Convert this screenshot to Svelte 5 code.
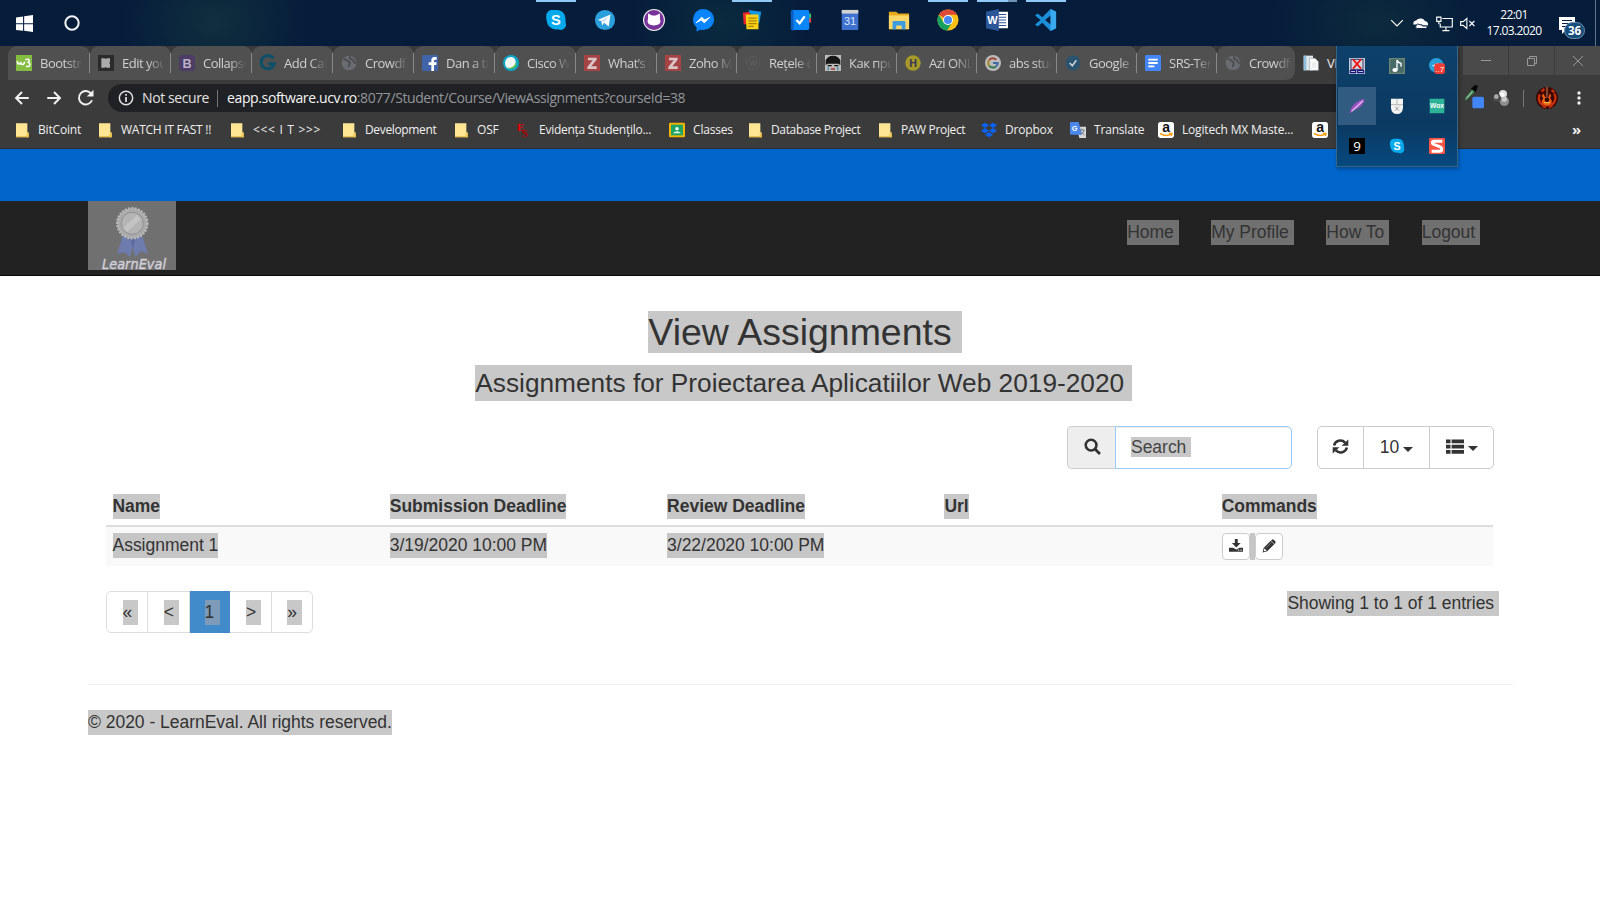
<script>
  const letter = (t, color, size = 15, extra = '') =>
    `<text x="12" y="${12 + size * 0.37}" text-anchor="middle" font-family="Liberation Sans, sans-serif" font-weight="700" font-size="${size}" fill="${color}" ${extra}>${t}</text>`;

  const icons = {
    skype: `<path d="M7 1h7a9 9 0 0 1 8 8c1 3 0 6 1 8a6 6 0 0 1-9 5A10 10 0 0 1 2 13C1 10 0 2 7 1z" fill="#06a9ec"/>` + letter('S', '#fff', 16),
    telegram: `<circle cx="12" cy="12" r="11" fill="#2a9fdb"/><path d="M4 12l14-6-2 13-5-4-2 3-1-5z" fill="#fff"/><path d="M8 13l8-5-5 6" fill="#b9d8ea"/>`,
    github: `<circle cx="12" cy="12" r="12" fill="#eee"/><circle cx="12" cy="12" r="10.8" fill="#773399"/><path d="M5.500 5l4.500 2h4l4.500-2v6c2 5-2 7-6.500 7s-8.500-2-6.500-7z" fill="#fff"/>`,
    messenger: `<path d="M12 0a12 11.500 0 0 1 0 23l-3-.3L5 24.500V20A11.500 11.500 0 0 1 12 0z" fill="#0a84ff"/><path d="M4.500 15l6-6 3.500 3 5.500-3-6 6-3.500-3z" fill="#fff" stroke="#fff"/>`,
    notes: `<path d="M2 4l8-1-2 13-5 1z" fill="#e6252b"/><path d="M8 1l14 2-2 12-4 2z" fill="#1597e5"/><path d="M5 6h14v16H6z" fill="#fcd116"/><path d="M8 10h9M8 13h9M8 16h9M8 19h6" stroke="#a88400" stroke-width="1.300"/>`,
    todo: `<path d="M20 5h3v5h-3z" fill="#2ec36a"/><path d="M20 10h3v5h-3z" fill="#ea4335"/><rect x="1" y="1" width="20" height="22" rx="2" fill="#0b86f8"/><path d="M1 3l3-3v24l-3-2z" fill="#0a5fc7"/><path d="M7 12l3.500 3.500L16 8" fill="none" stroke="#fff" stroke-width="2.500"/>`,
    calendar: `<rect x="3" y="1" width="18" height="22" rx="1" fill="#4071ce"/><rect x="3" y="1" width="18" height="4" fill="#d2d2d2"/>` + letter('31', '#d9e6ff', 12, 'style="font-weight:400" dy="1.5"'),
    folder: `<path d="M1 3h8l2 2h12v17H1z" fill="#e8a91a"/><path d="M1 7h22v15H1z" fill="#fbd768"/><path d="M5 22v-8q0-1 1-1h12q1 0 1 1v8h-4v-4H9v4z" fill="#3d9be0"/>`,
    chrome: `<circle cx="12" cy="12" r="11.500" fill="#fbc116"/><path d="M12 12L2 6.300A11.500 11.500 0 0 1 22 6.300H12z" fill="#de4a38"/><path d="M2 6.300A11.500 11.500 0 0 0 11 23.500l5.500-9L12 12 7 14.500z" fill="#18a05e"/><circle cx="12" cy="12" r="5.500" fill="#fff"/><circle cx="12" cy="12" r="4.400" fill="#4688f1"/>`,
    word: `<path d="M11 3h13v18H11z" fill="#fff"/><path d="M14 6h8M14 9h8M14 12h8M14 15h8M14 18h8" stroke="#2b579a" stroke-width="1.300"/><path d="M0 3l14-3v24L0 21z" fill="#2b579a"/><text x="7" y="16.500" text-anchor="middle" font-family="Liberation Sans, sans-serif" font-weight="700" font-size="12" fill="#fff">W</text>`,
    vscode: `<path d="M17 0l6 3v18l-6 3-9-9-5 4-3-2 6-5-6-5 3-2 5 4zM17 7l-6 5 6 5z" fill="#1c8ed8" fill-rule="evenodd"/><path d="M17 0l6 3v18l-6 3z" fill="#3aa8ec"/>`,

    w3: `<rect width="24" height="24" fill="#85bd43"/><path d="M2 9c0 6 5 6 5 1 0 5 5 6 6 0M14 7c7-3 7 4 3 4 6 0 5 8-2 6" fill="none" stroke="#fff" stroke-width="2.300"/>`,
    kick: `<rect width="24" height="24" fill="#2b2b2b"/><path d="M5 5h5l1 1 2-1h5v5l-1 2 1 2v5h-5l-2-1-1 1H5z" fill="#aaa"/>`,
    boot: `<rect width="24" height="24" rx="4" fill="#4c3c66"/>` + letter('B', '#b9b1c6', 19),
    gteal: `<path d="M20 5A10 10 0 1 0 21.500 13H12" fill="none" stroke="#0e5069" stroke-width="4.500"/>`,
    globe: `<circle cx="12" cy="12" r="11" fill="#696c70"/><path d="M4 6c4 0 5 3 8 4s-1 5 0 8M14 2c-4 5 6 4 5 8l3 3" fill="none" stroke="#4b4d50" stroke-width="3"/>`,
    fb: `<rect width="24" height="24" rx="1" fill="#4063a9"/><path d="M14 24v-9h-4v-4h4V8q0-5 5-5h3v4h-2q-2 0-2 2v2h4l-.6 4H18v9z" fill="#fff"/>`,
    webex: `<circle cx="12" cy="12" r="12" fill="#06a5c6"/><path d="M3 12A9 9 0 0 1 12 3a7 7 0 0 1 7 7c0 6-7 12-13 9a9 9 0 0 1-3-7z" fill="#f4f7f4"/><path d="M7 19c6 1 11-3 13-9 2 7-6 14-13 9z" fill="#6dbf4b"/>`,
    zoho: `<rect width="24" height="24" fill="#a54345"/><path d="M6 4h13v3l-8 10h8v4H5v-3l8-10H6z" fill="#dbc4c5"/>`,
    wordpress: `<circle cx="12" cy="12" r="10" fill="none" stroke="#5b5b5b" stroke-width="1.500"/>` + letter('W', '#5d5d5d', 13),
    face: `<rect width="24" height="24" fill="#bcbcbc"/><path d="M1 15V8q3-7 11-7t11 7v7l-3-2H4z" fill="#161616"/><path d="M4 16h6M14 16h6" stroke="#111" stroke-width="2"/><path d="M5 18v5M19 18v5" stroke="#3a90b0" stroke-width="2"/><path d="M9 21h6" stroke="#a22" stroke-width="2"/>`,
    hcircle: `<circle cx="12" cy="12" r="11.500" fill="#a59a28"/>` + letter('H', '#35325c', 16),
    googlew: `<circle cx="12" cy="12" r="12" fill="#bbb"/><g transform="translate(3 3) scale(.75)"><path d="M4.500 6A9.500 9.500 0 0 1 18.500 5.500" stroke="#a5443c" stroke-width="4" fill="none"/><path d="M4.500 6A10 10 0 0 0 4.500 18" stroke="#a98b30" stroke-width="4" fill="none"/><path d="M4.500 17.500A9.500 9.500 0 0 0 18 19" stroke="#2f7548" stroke-width="4" fill="none"/><path d="M12 12h9.500q0 4-3.500 7" stroke="#416ba5" stroke-width="4" fill="none"/></g>`,
    check: `<path d="M12 0l3 2 4 0 1 4 3 3-1 3 1 4-3 2-1 4-4 0-3 2-3-2-4 0-1-4-3-2 1-4-1-3 3-3 1-4 4 0z" fill="#2a5370"/><path d="M7 12l4 4 6-8" fill="none" stroke="#c8d0d6" stroke-width="2.500"/>`,
    docs: `<rect width="24" height="24" rx="2" fill="#4285f4"/><path d="M5 7h14M5 12h14M5 17h9" stroke="#fff" stroke-width="2.700"/>`,
    page: `<path d="M1 1h14v22H1z" fill="#dfe6ea"/><path d="M1 1h4v22H1z" fill="#8fc0de"/><path d="M10 5h8l5 5v13H10z" fill="#fff" stroke="#9aa7ae"/><path d="M13 12h7M13 15h7M13 18h7" stroke="#c5ccd0"/>`,

    bmfolder: `<path d="M3 2h17v13l2 1v7H3z" fill="#ffe694"/><path d="M19 16h3v7h-3z" fill="#f1c64a"/><path d="M3 22h19" stroke="#e4bb48" stroke-width="1.500"/>`,
    es: `<text x="3" y="13" font-family="Liberation Serif, serif" font-weight="700" font-size="17" fill="#e90006">E</text><text x="10" y="22" font-family="Liberation Serif, serif" font-weight="700" font-size="17" fill="#a80000">S</text>`,
    classes: `<rect y="1" width="24" height="22" rx="2" fill="#f4b400"/><rect x="3" y="4" width="18" height="16" fill="#1fa463"/><circle cx="12" cy="10" r="2.500" fill="#fff"/><path d="M6 17q6-6 12 0z" fill="#e5f5ec"/>`,
    dropbox: `<path d="M6 1l6 4-6 4-6-4zM18 1l6 4-6 4-6-4zM6 9l6 4-6 4-6-4zM18 9l6 4-6 4-6-4zM12 15l6 4-6 4-6-4z" fill="#0a62f5"/>`,
    translate: `<path d="M10 7h14v17H14z" fill="#d8d8d8"/><path d="M0 0h13l5 19H2q-2 0-2-2z" fill="#4a86ec"/><text x="7" y="14" text-anchor="middle" font-family="Liberation Sans, sans-serif" font-weight="700" font-size="11" fill="#fff">G</text><path d="M14 12h8M18 10v2M21 12q-1 5-5 7M16 14l6 6" stroke="#66737e" fill="none" stroke-width="1.300"/>`,
    amazon: `<rect width="24" height="24" rx="4" fill="#fff"/><text x="12" y="15.500" text-anchor="middle" font-family="Liberation Sans, sans-serif" font-weight="700" font-size="21" fill="#111">a</text><path d="M3 17q9 6 17 1M16 17h5l-1 4" fill="none" stroke="#ff9900" stroke-width="2"/>`,

    screens: `<rect width="24" height="24" fill="#c7c7d5"/><rect x="3" y="2" width="18" height="15" fill="#d5d5dc" stroke="#23235a" stroke-width="1.300"/><path d="M6 2l12 14M18 2L6 16" stroke="#f01010" stroke-width="2.500"/><path d="M2 19h8v3H2zM13 19h9v3h-9z" fill="#fff" stroke="#11117b" stroke-width="1.700"/>`,
    music: `<rect width="24" height="24" fill="#476a6b"/><rect x="1" y="1" width="22" height="22" fill="none" stroke="#6e8574" stroke-width="2"/><path d="M12 18V3q1 4 6 5v5" fill="none" stroke="#fff" stroke-width="2"/><ellipse cx="9" cy="18" rx="4" ry="3" fill="#fff"/>`,
    tgbadge: `<circle cx="11" cy="11" r="11" fill="#289fd9"/><path d="M4 12l9-5v6z" fill="#fff"/><rect x="8" y="8" width="16" height="16" rx="4" fill="#f23c34"/><text x="16" y="21" text-anchor="middle" font-family="Liberation Sans, sans-serif" font-size="12" fill="#fff">..7</text>`,
    feather: `<path d="M1 24C2 13 9 5 23 1c0 8-7 15-16 17z" fill="#9b4fc0"/><path d="M4 20L21 4" stroke="#e1bdf1" stroke-width="2"/>`,
    mouse: `<path d="M3 1h18v14q-1 9-9 9t-9-9z" fill="#f3f3f3"/><path d="M3 10h18M12 1v9" stroke="#aaa" stroke-width="1.300"/><path d="M9 13l6 6M15 13l-6 6" stroke="#888" stroke-width="1.300"/>`,
    wox: `<rect x="1" y="1" width="22" height="22" rx="1" fill="#2eb398"/><text x="12" y="15" text-anchor="middle" font-family="Liberation Sans, sans-serif" font-weight="700" font-size="10" fill="#fff">Wox</text>`,
    nine: `<rect width="24" height="24" fill="#000"/><text x="12" y="19" text-anchor="middle" font-family="Open Sans, sans-serif" font-size="20" fill="#fff">9</text>`,
    snag: `<rect width="24" height="24" rx="2" fill="#fa5543"/><path d="M20 5H8q-3 0-3 2t3 3l8 3q3 1 3 4t-3 3H4" fill="none" stroke="#fff" stroke-width="4.500"/>`,

    back: `<path d="M21 12H4M12 4l-8 8 8 8" fill="none" stroke="#f1f1f1" stroke-width="2.600"/>`,
    forward: `<path d="M3 12h17M12 4l8 8-8 8" fill="none" stroke="#f1f1f1" stroke-width="2.600"/>`,
    reload: `<path d="M20 15A9 9 0 1 1 19 6.500" fill="none" stroke="#f1f1f1" stroke-width="2.600"/><path d="M22 1v9h-9z" fill="#f1f1f1"/>`,
    info: `<circle cx="12" cy="12" r="10" fill="none" stroke="#e0e0e0" stroke-width="2.200"/><path d="M12 10.500V18M12 6v2.600" stroke="#e0e0e0" stroke-width="2.600"/>`,
    dropper: `<path d="M1 19l1-4L10 5l3 3L4 17z" fill="#3f8d55"/><path d="M3 16l7-8" stroke="#d7e6da" stroke-width="1"/><path d="M8 4l6 5 1-3 2-5-4-1-3 3z" fill="#060606"/><rect x="10" y="14" width="14" height="14" rx="2" fill="#4285f4"/>`,
    balls: `<circle cx="15" cy="6" r="6" fill="#ddd"/><circle cx="17" cy="17" r="7" fill="#8e8e8e"/><circle cx="17" cy="14" r="4" fill="#c8c8c8"/><circle cx="6" cy="12" r="6" fill="#4a4a4a"/><circle cx="5" cy="10" r="3.500" fill="#aaa"/><circle cx="14" cy="7" r="3.500" fill="#f8f8f8"/>`,
    avatar: `<circle cx="12" cy="12" r="12" fill="#3a0703"/><path d="M4 8q-3 8 4 12M20 7q4 8-4 13M6 5l3-3M17 3l3 3M7 21l4 1M14 22l4-2" fill="none" stroke="#c8310c" stroke-width="2.500"/><path d="M8 7q-3 3 0 5-4 5 1 8 4 2 7-1 3-4-1-7 3-2 0-5l-1 4h-4z" fill="#ed5a17"/><path d="M12 0v14" stroke="#84452c" stroke-width="2.500"/><circle cx="12" cy="14" r="2.500" fill="#2d0703"/><path d="M9 17h6" stroke="#ffc04a" stroke-width="1.300"/>`,

    win: `<path d="M0 3.500l10-1.400V11.500H0zM11.500 1.900L24 0v11.500H11.500zM0 13h10v9.400L0 21zM11.500 13H24v11l-12.500-1.700z" fill="#fff"/>`,
    ring: `<circle cx="12" cy="12" r="10" fill="none" stroke="#f2f4f6" stroke-width="3"/>`,
    down: `<path d="M2 7l10 10L22 7" fill="none" stroke="#fff" stroke-width="2"/>`,
    cloud: `<path d="M1 14q-2-6 4-7 3-4 9-3 4 1 5 4 6 1 5 7H11q-1-4-5-2z" fill="#fff"/><path d="M5 15q2-4 6-1 5-1 4 2h8q0 4-3 4H7q-5-1-2-5z" fill="#fff" stroke="#061d3d" stroke-width="1.500"/>`,
    monitor: `<path d="M9 5h14v12H6V12M14 17v5M9 22h10M1 3h6v6H1zM4 9v4" fill="none" stroke="#fff" stroke-width="1.600"/>`,
    mute: `<path d="M1 9h4l6-5v16l-6-5H1z" fill="none" stroke="#fff" stroke-width="1.700"/><path d="M15 8l8 8M23 8l-8 8" stroke="#fff" stroke-width="1.800"/>`,

    magnifier: `<circle cx="10" cy="10" r="7.600" fill="none" stroke="#333" stroke-width="3.600"/><path d="M15.500 15.500l7 7" stroke="#333" stroke-width="4"/>`,
    refresh: `<path d="M3 10.500A9 8.500 0 0 1 18.500 6.500" fill="none" stroke="#333" stroke-width="3.600"/><path d="M23 2v9h-9.500z" fill="#333"/><path d="M21 13.500A9 8.500 0 0 1 5.500 17.500" fill="none" stroke="#333" stroke-width="3.600"/><path d="M1 22v-9h9.500z" fill="#333"/>`,
    list: `<path d="M0 2h6v5H0zM7.500 2H24v5H7.500zM0 9h6v5H0zM7.500 9H24v5H7.500zM0 16h6v5H0zM7.500 16H24v5H7.500z" fill="#333"/>`,
    download: `<path d="M10 0h5v7h5l-7.500 7.500L5 7h5z" fill="#333"/><path d="M0 15h7l5.500 3 5.500-3h6v7H0z" fill="#333"/><path d="M15 19h2.500M19.500 19H22" stroke="#fff" stroke-width="1.600"/>`,
    pencil: `<path d="M1 23l2-8L15 3l6 6L9 21z" fill="#333"/><path d="M16.500 1.500q2-2 4 0l2 2q2 2 0 4l-1 1-6-6z" fill="#333"/><path d="M4 16l4 4-5 1z" fill="#fff"/><path d="M7 15L16 6" stroke="#aaa" stroke-width="1"/>`
  };

  const apps = [
    ['skype', 'run'], ['telegram', ''], ['github', ''], ['messenger', ''], ['notes', 'run'], ['todo', ''],
    ['calendar', ''], ['folder', ''], ['chrome', 'run'], ['word', 'run multi'], ['vscode', 'run']
  ];
  const tabs = [
    ['w3', 'Bootstra', 82], ['kick', 'Edit you', 81], ['boot', 'Collapse', 81], ['gteal', 'Add Car', 81],
    ['globe', 'Crowdfu', 81], ['fb', 'Dan a tr', 81], ['webex', 'Cisco W', 81], ['zoho', 'What’s n', 81],
    ['zoho', 'Zoho M', 80], ['wordpress', 'Rețele d', 80], ['face', 'Как при', 80], ['hcircle', 'Azi ONL', 80],
    ['googlew', 'abs stud', 80], ['check', 'Google', 80], ['docs', 'SRS-Ter', 80], ['globe', 'Crowdfu', 78]
  ];
  const bookmarks = [
    ['bmfolder', 'BitCoint', 83, ''], ['bmfolder', 'WATCH IT FAST !!', 132, 'caps'], ['bmfolder', '<<< I T >>>', 112, 'arrows'],
    ['bmfolder', 'Development', 112, 'dense'], ['bmfolder', 'OSF', 62, ''], ['es', 'Evidența Studenților...'.replace('ților', 'țilo').replace('....', '...'), 154, 'caps'],
    ['classes', 'Classes', 78, ''], ['bmfolder', 'Database Project', 130, 'dense'], ['bmfolder', 'PAW Project', 104, 'dense'],
    ['dropbox', 'Dropbox', 89, ''], ['translate', 'Translate', 88, ''], ['amazon', 'Logitech MX Maste...', 154, ''],
    ['amazon', '', 24, '']
  ];
  const tray = ['screens', 'music', 'tgbadge', 'feather', 'mouse', 'wox', 'nine', 'skype', 'snag'];
  const columns = ['Name', 'Submission Deadline', 'Review Deadline', 'Url'];
  const cells = ['Assignment 1', '3/19/2020 10:00 PM', '3/22/2020 10:00 PM', ''];
  const pages = ['«', '<', '1', '>', '»'];
</script>

{#snippet icon(name, size)}
  <svg class="icon {name}" viewBox="0 0 24 24" width={size} height={size}>{@html icons[name]}</svg>
{/snippet}

<div class="screen">
  <div class="taskbar">
    <div class="start">{@render icon('win', 17)}{@render icon('ring', 16)}</div>
    <div class="apps">
      {#each apps as [name, state]}
        <div class="app {state}">{@render icon(name, 22)}</div>
      {/each}
    </div>
    <div class="status">
      {@render icon('down', 14)}
      {@render icon('cloud', 15)}
      {@render icon('monitor', 17)}
      {@render icon('mute', 15)}
      <div class="clock"><span>22:01</span><span>17.03.2020</span></div>
      <div class="action">
        <svg width="17" height="17" viewBox="0 0 17 17"><path d="M0 0h16v13H7l-4 4v-4H0z" fill="#fff" /><path d="M3 3.500h10M3 6.500h10M3 9.500h6" stroke="#0b2240" stroke-width="1.200" /></svg>
        <span class="badge">36</span>
      </div>
    </div>
  </div>

  <div class="tabstrip">
    {#each tabs as [name, label, w]}
      <div class="tab" style="width:{w}px">{@render icon(name, 16)}<span>{label}</span></div>
    {/each}
    <div class="tab current">{@render icon('page', 16)}<span>Vi</span></div>
    <div class="controls">
      <div><svg width="12" height="12"><path d="M1 5.500h10" stroke="#999" /></svg></div>
      <div><svg width="12" height="12"><path d="M1.500 3.500h7v7h-7zM3.500 3.500v-2h7v7h-2" fill="none" stroke="#999" /></svg></div>
      <div><svg width="12" height="12"><path d="M1 1l10 10M11 1L1 11" stroke="#999" /></svg></div>
    </div>
  </div>

  <div class="toolbar">
    <div class="navicons">{@render icon('back', 18)}{@render icon('forward', 18)}{@render icon('reload', 18)}</div>
    <div class="omnibox">
      {@render icon('info', 16)}
      <span class="secure">Not secure</span>
      <span class="bar"></span>
      <span class="host">eapp.software.ucv.ro</span><span class="path">:8077/Student/Course/ViewAssignments?courseId=38</span>
    </div>
    <div class="extensions">
      {@render icon('dropper', 20)}
      {@render icon('balls', 16)}
      <span class="bar"></span>
      {@render icon('avatar', 22)}
      <svg width="4" height="14"><circle cx="2" cy="2" r="1.700" fill="#eee" /><circle cx="2" cy="7" r="1.700" fill="#eee" /><circle cx="2" cy="12" r="1.700" fill="#eee" /></svg>
    </div>
  </div>

  <div class="bookmarks">
    {#each bookmarks as [name, label, w, kind]}
      <div class="bookmark {kind}" style="width:{w}px">{@render icon(name, 16)}<span>{label}</span></div>
    {/each}
    <b class="more">»</b>
  </div>

  <div class="stripe"></div>

  <header>
    <div class="logo">
      <svg width="88" height="69" viewBox="0 0 88 69">
        <path d="M35 34l-6 19 7-2 6 5 5-20zM42 36l5 20 6-6 7 3-6-19z" fill="#6d7bad" />
        <path d="M42 36l3 12 3-12z" fill="#5c6a9d" />
        <circle cx="44.300" cy="22.300" r="15" fill="#aaa" stroke="#b9b9b9" stroke-width="2.500" stroke-dasharray="2 1.300" />
        <circle cx="44.300" cy="22.300" r="11" fill="#b4b4b4" stroke="#909090" />
        <path d="M36 28L50 15M38 30l14-13" stroke="#c3c3c3" stroke-width="3" />
        <text x="14" y="67.500" textLength="64" lengthAdjust="spacingAndGlyphs" font-family="DejaVu Sans, sans-serif" font-style="italic" font-size="14" fill="#d2cfda" stroke="#d2cfda" stroke-width=".4">LearnEval</text>
      </svg>
    </div>
    <nav>
      {#each ['Home', 'My Profile', 'How To', 'Logout'] as link}
        <span class="sel end">{link}</span>
      {/each}
    </nav>
  </header>

  <main>
    <h2><span class="sel">View Assignments</span></h2>
    <p class="lead"><span class="sel">Assignments for Proiectarea Aplicatiilor Web 2019-2020</span></p>

    <div class="actions">
      <div class="search">
        <div class="addon">{@render icon('magnifier', 17)}</div>
        <div class="field"><span class="sel end">Search</span></div>
      </div>
      <div class="buttons">
        <div class="btn refreshbtn">{@render icon('refresh', 17)}</div>
        <div class="btn count">10<i class="caret"></i></div>
        <div class="btn view">{@render icon('list', 18)}<i class="caret"></i></div>
      </div>
    </div>

    <div class="table">
      <div class="row head">
        {#each columns as c}<div><span class="sel">{c}</span></div>{/each}
        <div><span class="sel">Commands</span></div>
      </div>
      <div class="row body">
        {#each cells as c}<div><span class="sel">{c}</span></div>{/each}
        <div class="commands">
          <span class="mini">{@render icon('download', 14)}</span><span class="space"></span><span class="mini">{@render icon('pencil', 14)}</span>
        </div>
      </div>
    </div>

    <div class="bottom">
      <div class="pagination">
        {#each pages as p}<div class:active={p === '1'}><span class="sel">{p}</span></div>{/each}
      </div>
      <span class="sel end entries">Showing 1 to 1 of 1 entries</span>
    </div>
  </main>

  <footer><span class="sel">© 2020 - LearnEval. All rights reserved.</span></footer>

  <div class="traypopup">
    {#each tray as name}
      <div class:hover={name === 'feather'}>{@render icon(name, 16)}</div>
    {/each}
  </div>
</div>

<style>
  :global(body) { margin: 0; background: #fff; }
  * { box-sizing: border-box; }
  .screen {
    position: relative; width: 1600px; height: 900px; overflow: hidden;
    background: #fff; color: #333;
    font: 17.5px/25px "Liberation Sans", Arial, sans-serif; letter-spacing: -.02px;
  }
  .icon { display: block; flex: none; overflow: visible; }

  .taskbar {
    height: 46px; display: flex;
    font-family: "Open Sans", "Noto Sans", sans-serif;
    background:
      radial-gradient(ellipse 95px 80px at 215px 22px, #102f3e, transparent),
      radial-gradient(ellipse 95px 80px at 720px 22px, #0a2a3e, transparent),
      radial-gradient(ellipse 110px 80px at 1375px 22px, #0c2a3d, transparent),
      #051c3b;
  }
  .start { width: 532px; padding-left: 16px; display: flex; align-items: center; gap: 31px; }
  .apps { display: flex; }
  .app { width: 49px; height: 46px; padding: 9px 0 0 13px; background: linear-gradient(#90c8f6, #90c8f6) 4px 0 / 0 2px no-repeat; }
  .run { background-size: 40px 2px; }
  .multi { background: linear-gradient(90deg, #90c8f6 31px, #6f95b5 31px) 4px 0 / 40px 2px no-repeat; }
  .status { margin-left: auto; display: flex; align-items: center; width: 210px; }
  .status .cloud { margin-left: 9px; }
  .status .monitor { margin-left: 8px; }
  .status .mute { margin-left: 7px; }
  .clock { width: 68px; margin-left: 5px; display: flex; flex-direction: column; align-items: center; color: #fff; font-size: 12px; line-height: 16px; letter-spacing: -.6px; }
  .action { position: relative; flex: none; width: 38px; height: 46px; margin: 0 4px 0 10px; padding: 15px 0 0 1px; border-right: 1px solid #5d7287; }
  .badge { position: absolute; left: 6px; top: 22px; width: 21px; height: 17px; border: 1px solid #6a90ae; border-radius: 9px; background: #174d7a; color: #fff; font: 700 11.500px/15px "Open Sans", sans-serif; text-align: center; }

  .tabstrip {
    height: 38px; background: #3b3b3b; padding-left: 8px; display: flex;
    font: 13px/34px "Open Sans", "Noto Sans", sans-serif; color: #d0d0d0; letter-spacing: -.5px;
  }
  .tab { height: 34px; flex: none; display: flex; align-items: center; gap: 8px; padding-left: 8px; background: #505050; border-radius: 9px 9px 0 0; position: relative; }
  .tab::after { content: ""; position: absolute; right: 0; top: 7px; width: 1px; height: 20px; background: #888; }
  .tab:nth-child(16) { border-radius: 9px 9px 9px 0; }
  .tab:nth-child(16)::after { display: none; }
  .tab span { width: 43px; padding-bottom: 1px; white-space: nowrap; -webkit-mask: linear-gradient(90deg, #000 60%, transparent); mask: linear-gradient(90deg, #000 60%, transparent); }
  .tab:nth-child(14) span { width: 50px; }
  .tab.current { background: #3b3b3b; width: 168px; color: #eee; }
  .tab.current::after { display: none; }
  .tab.current span { -webkit-mask: none; mask: none; letter-spacing: -.2px; }
  .controls { display: flex; height: 29px; }
  .controls div { width: 46px; background: #4a4a4a; border-right: 1px solid #3d3d3d; display: grid; place-items: center; }

  .toolbar { height: 28px; display: flex; background: #3b3b3b; font: 14px/28px "Open Sans", "Noto Sans", sans-serif; }
  .navicons { width: 108px; display: flex; align-items: center; gap: 14px; padding-left: 13px; }
  .omnibox { width: 1340px; background: #202124; border-radius: 14px; display: flex; align-items: center; color: #e3e3e3; padding-left: 10px; white-space: nowrap; }
  .secure { margin-left: 8px; width: 75px; letter-spacing: -.4px; }
  .bar { width: 1px; height: 17px; background: #777; }
  .host { margin-left: 9px; color: #f6f6f6; letter-spacing: -.37px; }
  .path { color: #92969a; letter-spacing: -.42px; }
  .extensions { display: flex; align-items: center; padding-left: 16px; }
  .extensions .dropper { margin-top: -6px; }
  .extensions .balls { margin-left: 9px; }
  .extensions .bar { margin: 0 12px 0 14px; }
  .extensions > svg:last-child { margin-left: 19px; }

  .bookmarks { height: 37px; padding: 0 0 1px 14px; display: flex; align-items: center; background: #3b3b3b; border-bottom: 1px solid #2b2b2b; color: #f0f0f0; font: 12px/20px "Open Sans", "Noto Sans", sans-serif; letter-spacing: -.18px; }
  .bookmark { flex: none; display: flex; align-items: center; gap: 8px; white-space: nowrap; }
  .arrows { letter-spacing: .7px; }
  .caps { letter-spacing: -.26px; }
  .dense { letter-spacing: -.35px; }
  .more { margin-left: auto; margin-right: 19px; font-size: 15px; padding-bottom: 2px; }

  .stripe { height: 52px; background: #0066cc; }
  header { height: 75px; background: #222; border-bottom: 1px solid #080808; padding: 0 120px 0 88px; display: flex; justify-content: space-between; }
  .logo { width: 88px; height: 69px; background: #707070; }
  .logo svg { display: block; }
  nav { display: flex; gap: 32.600px; padding-top: 19px; }
  .sel { background: #c8c8c8; white-space: pre; }
  .end { padding-right: 4.900px; }
  nav .sel { background: #707070; height: 25px; }

  main { padding: 35px 106px 0; }
  h2 { margin: 0; font: 400 37.500px/42px "Liberation Sans", Arial, sans-serif; text-align: center; }
  h2 .sel { display: inline-block; padding-right: 10px; margin-right: -10px; height: 42px; }
  .lead { margin: 12px 0 0; font-size: 26.250px; line-height: 36px; text-align: center; letter-spacing: 0; }
  .lead .sel { display: inline-block; padding-right: 7.500px; margin-right: -7px; height: 36px; }
  .actions { display: flex; justify-content: flex-end; gap: 25px; margin-top: 25px; height: 43px; }
  .search { display: flex; width: 225px; }
  .addon { width: 48px; background: #eee; border: 1px solid #ccc; border-right: 0; border-radius: 5px 0 0 5px; padding: 11px 0 0 16px; }
  .field { flex: 1; border: 1px solid #98cbfb; border-radius: 0 5px 5px 0; padding: 10px 0 0 15px; line-height: 20px; box-shadow: inset 0 1px 1px #00000013; }
  .field .sel { display: inline-block; height: 20px; color: #444; }
  .buttons { display: flex; width: 177px; border: 1px solid #ccc; border-radius: 5px; }
  .btn { display: flex; align-items: center; justify-content: center; border-right: 1px solid #ccc; padding-bottom: 1px; }
  .refreshbtn { width: 46px; padding-bottom: 2px; }
  .count { width: 66px; }
  .view { flex: 1; border: 0; padding-bottom: 2px; }
  .caret { border: 5px solid transparent; border-top-color: #333; border-bottom: 0; margin: 4px 0 0 4px; }
  .view .caret { margin: 4px 0 0 4px; }

  .table { margin-top: 19px; width: 1387px; }
  .row { display: grid; grid-template-columns: repeat(5, 277.300px); }
  .row > div { padding-left: 6.500px; }
  .row .sel { display: inline-block; height: 25px; vertical-align: top; }
  .head { height: 39px; padding-top: 6px; border-bottom: 2px solid #ddd; font-weight: 700; }
  .body { height: 39px; padding-top: 6px; background: #f9f9f9; }
  .body .sel { background: #c6c6c6; }
  .commands { display: flex; }
  .mini { width: 28px; height: 27px; border: 1px solid #ccc; border-radius: 4px; background: #fff; display: flex; align-items: flex-start; justify-content: center; padding-top: 5px; }
  .space { width: 5px; height: 27px; background: #c6c6c6; }

  .bottom { display: flex; justify-content: space-between; margin: 25px -5px 0 0; align-items: flex-start; }
  .pagination { display: flex; width: 207px; height: 42px; border: 1px solid #ddd; border-radius: 5px; }
  .pagination div { flex: 1; border-right: 1px solid #ddd; padding: 8px 0 0 15.500px; }
  .pagination div:last-child { border: 0; }
  .pagination .sel { display: block; width: 15px; height: 25px; }
  .pagination .active { background: #428bca; margin: -1px 0; padding: 9px 0 0 15px; border-color: #428bca; }
  .active .sel { background: #7d9ab8; }
  .entries { height: 25px; }
  footer { margin: 51px 87px 0 88px; border-top: 1px solid #eee; padding-top: 25px; }
  footer .sel { display: inline-block; height: 25px; }

  .traypopup { position: absolute; left: 1336px; top: 46px; width: 122px; height: 121px; border: 1px solid #386486; border-top: 0; background: linear-gradient(#0d416b, #0b3961 65%, #07497f); display: grid; grid-template-columns: repeat(3, 38px); grid-template-rows: repeat(3, 38px); gap: 2px; padding: 1px 0 0 1px; box-shadow: 1px 2px 4px #0005; }
  .traypopup div { display: grid; place-items: center; }
  .hover { background: #315b80; }
</style>
